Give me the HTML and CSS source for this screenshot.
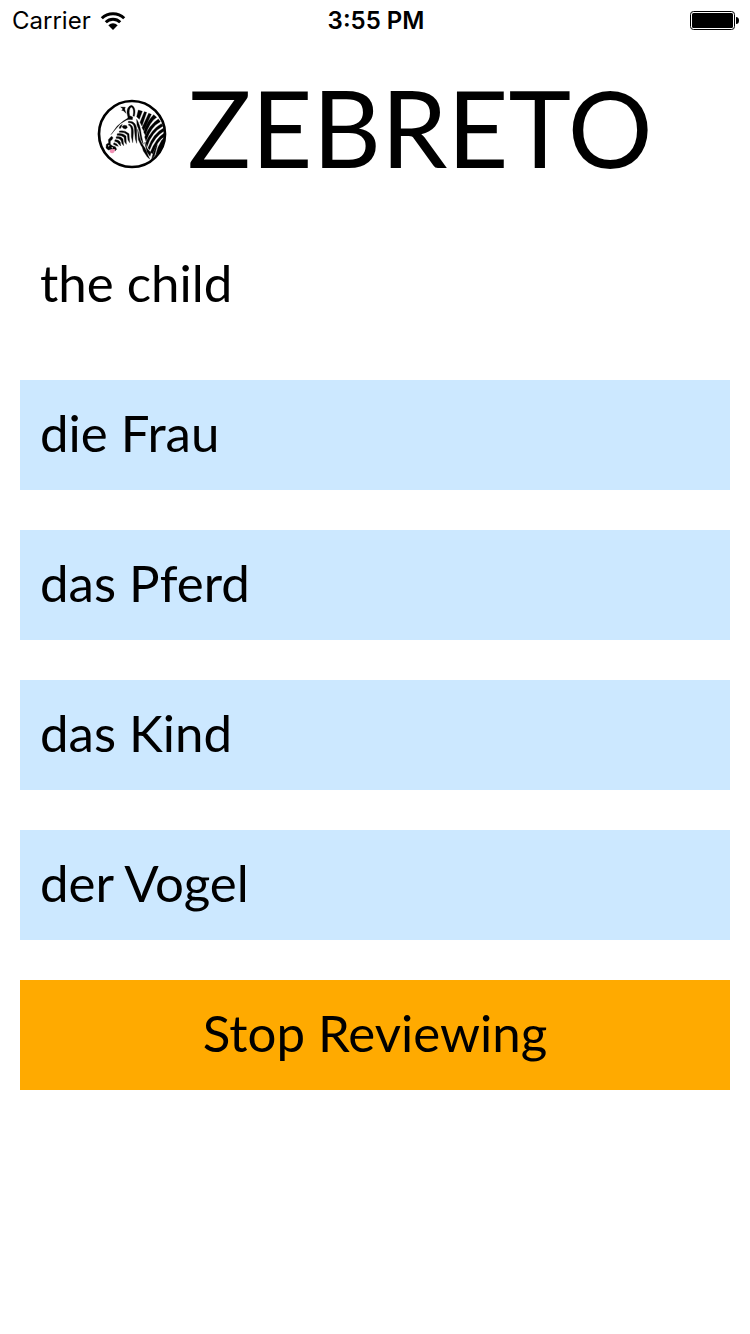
FILE: index.html
```html
<!DOCTYPE html>
<html lang="en">
<head>
<meta charset="utf-8">
<meta name="viewport" content="width=device-width, initial-scale=1">
<title>Zebreto</title>
<link rel="stylesheet" href="styles.css">
</head>
<body>
<div class="status-bar">
  <div class="carrier">
    <span>Carrier</span>
    <svg class="wifi" viewBox="0 0 26 20" aria-hidden="true">
      <path class="wifi-arc" d="M1.8 7.2A16 16 0 0 1 24.2 7.2M5.8 11.3A10.3 10.3 0 0 1 20.2 11.3"/>
      <path d="M8.3 14.2Q13 10.2 17.7 14.2L13 19Z"/>
    </svg>
  </div>
  <time class="clock">3:55 PM</time>
  <svg class="battery" viewBox="0 0 50 20" aria-hidden="true">
    <rect class="battery-case" x="0.5" y="0.5" width="44" height="18" rx="3"/>
    <rect x="2" y="2" width="41" height="15" rx="1.5"/>
    <path d="M46 6Q49 6 49 9.5T46 13Z"/>
  </svg>
</div>
<header class="brand">
  <svg class="logo" viewBox="18 17 210 210" aria-hidden="true">
    <circle class="ring" cx="123" cy="122" r="99"/>
    <g class="stripes">
      <path d="M89 41L103 42L101 47L105 60L97 52L92 51L96 47Z"/>
      <path d="M109 64C106 49 112 38 121 36C131 39 135 52 130 69L126 68C129 54 127 44 121 41C115 45 113 55 116 67L125 71L124 79C116 78 110 78 103 82L88 91L69 113L60 124L78 99L97 83C103 79 111 76 111 72Z"/>
      <path d="M93 100Q99 93 107 97L109 103L103 107L97 105Z"/>
      <path d="M84 105Q86 96 94 93L89 105Z"/>
      <path d="M112 84C126 82 136 91 137 107L137 150L133 137L130 105C129 93 123 88 112 88Z"/>
      <path d="M113 92C124 93 128 105 127 119L125 148L121 130L121 110C120 102 118 97 113 96Z"/>
      <path d="M85 113Q101 109 114 121L116 148L111 140L109 124Q99 115 85 117Z"/>
      <path d="M79 121Q96 118 105 128L106 153L101 146L99 132Q91 125 78 126Z"/>
      <path d="M76 130Q91 128 96 138L98 157L93 151L90 141Q84 134 75 135Z"/>
      <path d="M72 139Q84 138 88 147L89 158L84 153Q80 145 71 144Z"/>
      <path d="M69 148Q79 150 82 159L76 157L67 153Z"/>
      <path d="M60 130C65 129 68 134 63 139L58 143L58 153L65 158L73 160L77 168L73 172L62 168L52 170L45 164L46 153L53 149L52 139Z"/>
      <path d="M142 50L154 54L145 78L137 70ZM160 55L167 57L153 98L147 87ZM173 60L181 63L158 112L153 103ZM188 64L197 72Q177 84 163 126L158 116Q168 83 188 64ZM202 77L208 85Q181 98 165 143L161 131Q174 96 202 77ZM211 91L216 98Q181 117 168 160L164 148Q181 108 211 91ZM218 104L219 113Q190 130 176 169L171 164Q186 121 218 104ZM220 119L220 130Q201 139 185 181L178 177Q195 134 220 119Z"/>
      <path d="M212 141L220 133Q219 157 203 177L194 184L201 162ZM195 159L199 154L190 188L182 196L187 178ZM137 78Q148 95 151 125L157 153L149 137L145 113L138 95ZM140 108L146 134L157 163L151 158L142 139ZM149 146L162 164L176 197L169 191L157 173ZM161 147L168 165L180 178L177 189L168 176Z"/>
    </g>
    <path class="tongue" d="M57 170Q66 165 73 168L70 176Q63 184 56 175Z"/>
    <path class="glints" d="M51 158L55 157M62 163L66 164"/>
  </svg>
  <h1>ZEBRETO</h1>
</header>
<main class="review">
  <p class="row question">the child</p>
  <button class="row answer" type="button">die Frau</button>
  <button class="row answer" type="button">das Pferd</button>
  <button class="row answer" type="button">das Kind</button>
  <button class="row answer" type="button">der Vogel</button>
  <button class="row stop" type="button">Stop Reviewing</button>
</main>
</body>
</html>
```
FILE: styles.css
```css
* {
  box-sizing: border-box;
}

body {
  margin: 0;
  background: #fff;
  color: #000;
  font-family: Lato, "Open Sans", sans-serif;
}

.status-bar {
  display: grid;
  grid-template-columns: 1fr auto 1fr;
  align-items: center;
  padding: 1px 10px 0 12px;
  font: 24px/40px Inter, sans-serif;
}

.carrier {
  display: flex;
  align-items: center;
  gap: 9px;
}

.wifi {
  width: 26px;
  height: 20px;
}

.wifi-arc {
  fill: none;
  stroke: #000;
  stroke-width: 3;
}

.clock {
  font-weight: 600;
}

.battery {
  justify-self: end;
  width: 50px;
  height: 20px;
}

.battery-case {
  fill: none;
  stroke: #000;
}

.brand {
  display: flex;
  justify-content: center;
  align-items: center;
  gap: 20px;
  padding: 26px 0 29px;
}

.logo {
  width: 70px;
  height: 70px;
}

.ring {
  fill: #fff;
  stroke: #000;
  stroke-width: 8;
}

.stripes {
  stroke: #000;
  stroke-width: 1;
}

.tongue {
  fill: #f291b5;
}

.glints {
  stroke: #fff;
  stroke-width: 3;
}

h1 {
  margin: 0;
  padding-bottom: 14px;
  font-size: 106px;
  font-weight: 400;
  line-height: 120px;
}

.review {
  display: flex;
  flex-direction: column;
  gap: 40px;
  padding: 0 20px 20px;
}

.row {
  margin: 0;
  padding: 23px 20px 27px;
  border: 0;
  border-radius: 0;
  color: inherit;
  font-family: inherit;
  font-size: 51px;
  line-height: 60px;
  text-align: left;
}

.answer {
  background: #cce8ff;
}

.stop {
  background: #ffaa00;
  text-align: center;
}
```
